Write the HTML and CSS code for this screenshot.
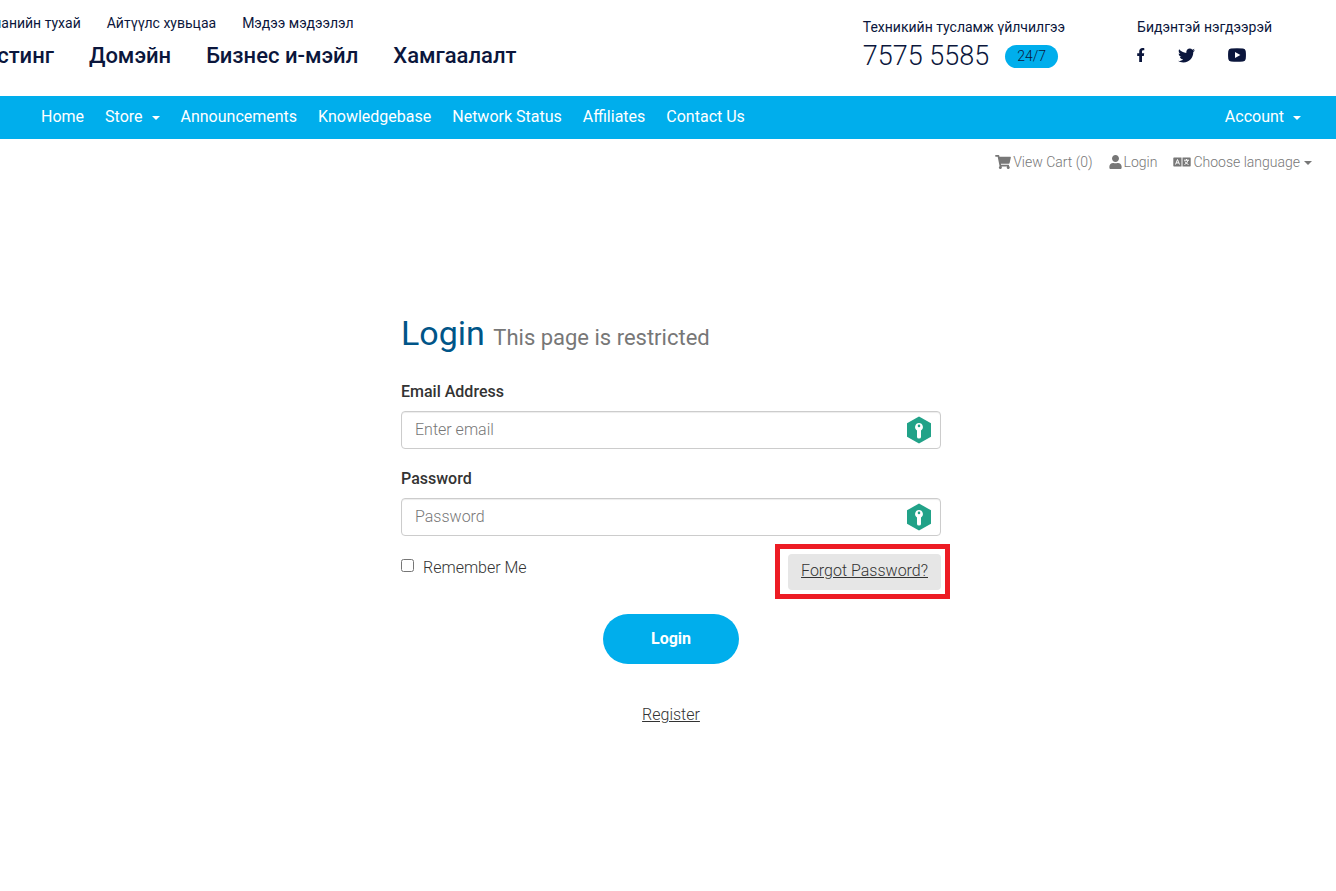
FILE: index.html
```
<!DOCTYPE html>
<html lang="mn">
<head>
    <meta charset="UTF-8">
    <meta name="viewport" content="width=device-width, initial-scale=1.0">
    <title>Login</title>
    <link rel="stylesheet" href="styles.css">
</head>
<body>
    <header class="header">
        <nav class="site-nav">
            <div class="top-links">
                <a href="#">Компанийн тухай</a>
                <a href="#">Айтүүлс хувьцаа</a>
                <a href="#">Мэдээ мэдээлэл</a>
            </div>
            <div class="main-links">
                <a href="#">Хостинг</a>
                <a href="#">Домэйн</a>
                <a href="#">Бизнес и-мэйл</a>
                <a href="#">Хамгаалалт</a>
            </div>
        </nav>
        <div class="contact">
            <div class="support">
                <div class="contact-title">Техникийн тусламж үйлчилгээ</div>
                <div class="phone">
                    <span>7575 5585</span>
                    <span class="badge">24/7</span>
                </div>
            </div>
            <div class="social">
                <div class="contact-title">Бидэнтэй нэгдээрэй</div>
                <div class="social-links">
                    <a href="#" aria-label="Facebook">
                        <svg width="8" height="14" viewBox="0 0 8 14"><path d="M2.2 14V7.9H.2V5.3h2V3.5C2.2 1.3 3.5 0 5.5 0c.9 0 1.8.2 1.8.2v2.1h-1c-1 0-1.3.6-1.3 1.3v1.7h2.2l-.4 2.6H5V14z"/></svg>
                    </a>
                    <a href="#" aria-label="Twitter">
                        <svg width="17" height="17" viewBox="0 0 512 512"><path d="M459.37 151.716c.325 4.548.325 9.097.325 13.645 0 138.72-105.583 298.558-298.558 298.558-59.452 0-114.68-17.219-161.137-47.106 8.447.974 16.568 1.299 25.34 1.299 49.055 0 94.213-16.568 130.274-44.832-46.132-.975-84.792-31.188-98.112-72.772 6.498.974 12.995 1.624 19.818 1.624 9.421 0 18.843-1.3 27.614-3.573-48.081-9.747-84.143-51.98-84.143-102.985v-1.299c13.969 7.797 30.214 12.67 47.431 13.319-28.264-18.843-46.781-51.005-46.781-87.391 0-19.492 5.197-37.36 14.294-52.954 51.655 63.675 129.3 105.258 216.365 109.807-1.624-7.797-2.599-15.918-2.599-24.04 0-57.828 46.782-104.934 104.934-104.934 30.213 0 57.502 12.67 76.67 33.137 23.715-4.548 46.456-13.32 66.599-25.34-7.798 24.366-24.366 44.833-46.132 57.827 21.117-2.273 41.584-8.122 60.426-16.243-14.292 20.791-32.161 39.308-52.628 54.253z"/></svg>
                    </a>
                    <a href="#" aria-label="YouTube">
                        <svg width="18" height="14" viewBox="0 0 18 14"><path fill-rule="evenodd" d="M3 .6Q9 .1 15 .6 17.4.8 17.7 3q.5 4 0 8-.3 2.2-2.7 2.4-6 .5-12 0Q.6 13.200.3 11q-.5-4 0-8Q.6.8 3 .6zM7 4v6l5.400-3z"/></svg>
                    </a>
                </div>
            </div>
        </div>
    </header>

    <nav class="navbar">
        <a href="#">Home</a>
        <a href="#">Store <span class="caret"></span></a>
        <a href="#">Announcements</a>
        <a href="#">Knowledgebase</a>
        <a href="#">Network Status</a>
        <a href="#">Affiliates</a>
        <a href="#">Contact Us</a>
        <a href="#" class="account">Account <span class="caret"></span></a>
    </nav>

    <div class="user-bar">
        <a href="#">
            <svg width="16" height="14" viewBox="0 0 576 512"><path d="M528.12 301.319l47.273-208C578.806 78.301 567.391 64 551.99 64H159.208l-9.166-44.81C147.758 8.021 137.93 0 126.529 0H24C10.745 0 0 10.745 0 24v16c0 13.255 10.745 24 24 24h69.883l70.248 343.435C147.325 417.1 136 435.222 136 456c0 30.928 25.072 56 56 56s56-25.072 56-56c0-15.674-6.447-29.835-16.824-40h209.647C430.447 426.165 424 440.326 424 456c0 30.928 25.072 56 56 56s56-25.072 56-56c0-22.172-12.888-41.332-31.579-50.405l5.517-24.276c3.413-15.018-8.002-29.319-23.403-29.319H218.117l-6.545-32h293.145c11.206 0 20.92-7.754 23.403-18.681z"/></svg>
            View Cart (0)
        </a>
        <a href="#">
            <svg width="13" height="14" viewBox="0 0 448 512"><path d="M224 256c70.7 0 128-57.3 128-128S294.7 0 224 0 96 57.3 96 128s57.3 128 128 128zm89.6 32h-16.7c-22.2 10.2-46.9 16-72.9 16s-50.6-5.8-72.9-16h-16.7C60.2 288 0 348.2 0 422.4V464c0 26.5 21.5 48 48 48h352c26.5 0 48-21.5 48-48v-41.6c0-74.2-60.2-134.400-134.400-134.400z"/></svg>
            Login
        </a>
        <button type="button">
            <svg width="18" height="10" viewBox="0 0 18 10">
                <path d="M1 .5h7.500v9H1Q.3 9.500.3 8.800V1.200Q.3.5 1 .5zM9.500.5H17q.7 0 .7.7v7.600q0 .7-.7.7H9.500z"/>
                <path class="icon-line" d="M2.500 7.500 4.500 2.500l2 5M3.200 5.900h2.600M11 3.200h5M13.500 2v1.200M15 3.200Q14.300 6.500 11.500 7.500M12 4.500q1 2.200 3.500 3"/>
            </svg>
            Choose language <span class="caret"></span>
        </button>
    </div>

    <main class="login">
        <h1>Login <small>This page is restricted</small></h1>
        <form>
            <div class="form-group">
                <label for="email">Email Address</label>
                <div class="field">
                    <input type="email" id="email" placeholder="Enter email">
                    <svg class="key" width="24" height="28" viewBox="0 0 24 28">
                        <path class="key-hex" d="M12 .5 24 7.300v13.400L12 27.500 0 20.700V7.300z"/>
                        <path class="key-body" fill-rule="evenodd" d="M12 7a4 4 0 0 0-2 7.400V21q0 1.500 2 1.500t2-1.500v-6.600A4 4 0 0 0 12 7zm0 1.600a1.300 1.300 0 1 1 0 2.600 1.300 1.300 0 0 1 0-2.600z"/>
                    </svg>
                </div>
            </div>
            <div class="form-group">
                <label for="password">Password</label>
                <div class="field">
                    <input type="password" id="password" placeholder="Password">
                    <svg class="key" width="24" height="28" viewBox="0 0 24 28">
                        <path class="key-hex" d="M12 .5 24 7.300v13.400L12 27.500 0 20.700V7.300z"/>
                        <path class="key-body" fill-rule="evenodd" d="M12 7a4 4 0 0 0-2 7.400V21q0 1.500 2 1.500t2-1.500v-6.600A4 4 0 0 0 12 7zm0 1.600a1.300 1.300 0 1 1 0 2.600 1.300 1.300 0 0 1 0-2.600z"/>
                    </svg>
                </div>
            </div>
            <div class="options">
                <div class="remember">
                    <input type="checkbox" id="remember">
                    <label for="remember">Remember Me</label>
                </div>
                <a href="#" class="forgot">Forgot Password?</a>
            </div>
            <div class="actions">
                <button type="submit" class="login-button">Login</button>
                <a href="#" class="register">Register</a>
            </div>
        </form>
    </main>
</body>
</html>
```
FILE: styles.css
```
:root {
    --blue: #00aeec;
    --navy: #0b163c;
    --text: #333;
    --muted: #777;
}

* {
    box-sizing: border-box;
}

body {
    margin: 0;
    font-family: Roboto, "Liberation Sans", sans-serif;
    font-size: 16px;
    font-weight: 300;
    line-height: 24px;
    color: var(--text);
    background: #fff;
    overflow-x: hidden;
}

a {
    color: inherit;
    text-decoration: none;
}

svg {
    display: block;
    fill: currentColor;
}

.header {
    display: flex;
    justify-content: space-between;
    min-height: 96px;
    padding-right: 64px;
    color: var(--navy);
    white-space: nowrap;
}

/* the menu runs off the left edge of the window */
.site-nav {
    margin-left: -34px;
    padding-top: 11px;
}

.top-links {
    display: flex;
    gap: 26px;
    font-size: 14px;
    font-weight: 400;
}

.main-links {
    display: flex;
    gap: 35px;
    padding-left: 5px;
    font-size: 22px;
    font-weight: 500;
    line-height: 42px;
}

.contact {
    display: flex;
    gap: 72px;
    padding-top: 15px;
}

.contact-title {
    font-size: 14px;
    font-weight: 400;
}

.phone {
    display: flex;
    align-items: center;
    gap: 16px;
    font-size: 27px;
    line-height: 34px;
}

.badge {
    padding: 0 12px;
    border-radius: 12px;
    background: var(--blue);
    font-size: 14px;
    line-height: 23px;
}

.social-links {
    display: flex;
    align-items: center;
    gap: 33px;
    height: 32px;
}

.navbar {
    display: flex;
    gap: 21px;
    padding: 9px 35px 10px 41px;
    background: var(--blue);
    color: #fff;
    font-weight: 400;
}

.account {
    margin-left: auto;
}

.caret {
    display: inline-block;
    margin-left: 5px;
    border: 4px solid transparent;
    border-top-color: currentColor;
    border-bottom: 0;
    vertical-align: middle;
}

.user-bar {
    display: flex;
    justify-content: flex-end;
    gap: 16px;
    padding: 11px 24px;
    color: var(--muted);
    font-size: 14px;
}

.user-bar a,
.user-bar button {
    display: flex;
    align-items: center;
    gap: 2px;
}

.user-bar button {
    padding: 0;
    border: 0;
    background: none;
    color: inherit;
    font: inherit;
    cursor: pointer;
}

.user-bar .caret {
    margin: 2px 0 0 2px;
}

.icon-line {
    fill: none;
    stroke: #fff;
}

.login {
    max-width: 546px;
    margin: 128px auto 0;
    padding-left: 6px;
}

.login h1 {
    margin: 0 0 22px;
    color: #058;
    font-size: 34px;
    font-weight: 400;
    line-height: 40px;
}

.login small {
    color: #777;
    font-size: 22px;
}

.form-group {
    margin-bottom: 18px;
}

.form-group label {
    display: block;
    margin-bottom: 7px;
    font-weight: 500;
}

.field {
    position: relative;
}

.field input {
    display: block;
    width: 100%;
    height: 38px;
    padding: 6px 40px 8px 13px;
    border: 1px solid #ccc;
    border-radius: 4px;
    box-shadow: inset 0 1px 1px rgba(0, 0, 0, 0.075);
    font: inherit;
    color: #555;
}

.field input::placeholder {
    color: #777;
}

.key {
    position: absolute;
    top: 5px;
    right: 10px;
}

.key-hex {
    fill: #21a288;
}

.key-body {
    fill: #fff;
}

.options {
    display: flex;
    justify-content: space-between;
    align-items: flex-start;
}

.remember {
    display: flex;
    gap: 9px;
    padding-top: 2px;
}

.remember input {
    width: 13px;
    height: 13px;
    margin: 3px 0 0;
}

.forgot {
    position: relative;
    padding: 5px 13px 7px;
    border-radius: 4px;
    background: #e6e6e6;
    text-decoration: underline;
}

/* red highlight around the link */
.forgot::after {
    content: "";
    position: absolute;
    inset: -10px -9px -9px -13px;
    border: 5px solid #ed1c24;
    pointer-events: none;
}

.actions {
    display: flex;
    flex-direction: column;
    align-items: center;
    gap: 39px;
    padding-top: 24px;
}

.login-button {
    padding: 13px 48px;
    border: 0;
    border-radius: 25px;
    background: var(--blue);
    color: #fff;
    font: inherit;
    font-weight: 700;
    cursor: pointer;
}

.register {
    text-decoration: underline;
}
```
